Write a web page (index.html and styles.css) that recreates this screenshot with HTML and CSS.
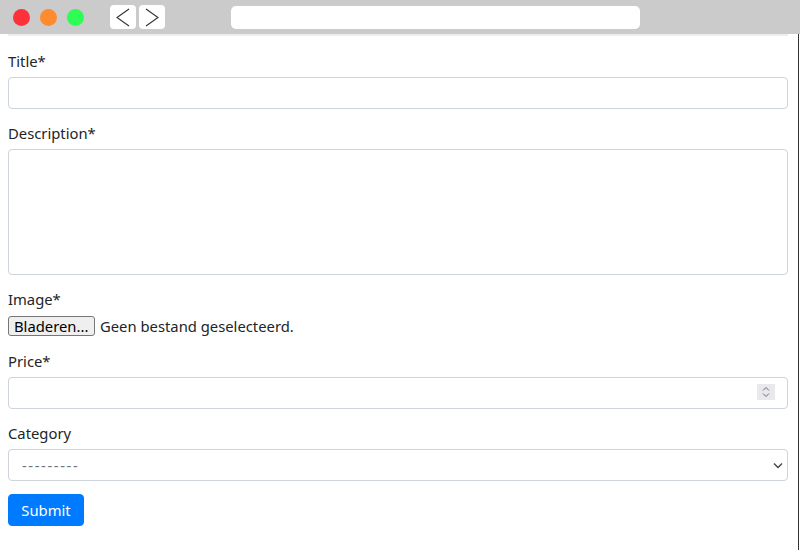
FILE: index.html
```html
<!DOCTYPE html>
<html>
<head>
<meta charset="utf-8">
<link rel="stylesheet" href="styles.css">
</head>
<body>
<div class="titlebar">
  <div class="lights">
    <span class="light red"></span>
    <span class="light orange"></span>
    <span class="light green"></span>
  </div>
  <div class="navs">
    <span class="navbtn"><svg width="26" height="24" viewBox="0 0 26 24"><path d="M19 4 L7 12.5 L19 21" fill="none" stroke="#333" stroke-width="1.1"/></svg></span>
    <span class="navbtn"><svg width="26" height="24" viewBox="0 0 26 24"><path d="M7 4 L19 12.5 L7 21" fill="none" stroke="#333" stroke-width="1.1"/></svg></span>
  </div>
  <div class="urlbar"></div>
</div>
<div class="page">
  <div class="divider"></div>
  <form class="form">
    <div class="group">
      <label class="label">Title*</label>
      <input class="control" type="text">
    </div>
    <div class="group">
      <label class="label">Description*</label>
      <textarea class="control area"></textarea>
    </div>
    <div class="group file-group">
      <label class="label">Image*</label>
      <div class="file">
        <span class="file-btn">Bladeren...</span>
        <span class="file-name">Geen bestand geselecteerd.</span>
      </div>
    </div>
    <div class="group">
      <label class="label">Price*</label>
      <div class="field">
        <input class="control" type="text">
        <span class="spinner"><svg width="18" height="16" viewBox="0 0 18 16"><path d="M6 6.5 L9 3.5 L12 6.5 M6 9.5 L9 12.5 L12 9.5" fill="none" stroke="#6b6b6b" stroke-width="1"/></svg></span>
      </div>
    </div>
    <div class="group">
      <label class="label">Category</label>
      <div class="field">
        <select class="control select"><option>---------</option></select>
        <span class="caret"><svg width="10" height="7" viewBox="0 0 10 7"><path d="M1 1.5 L5 5.5 L9 1.5" fill="none" stroke="#444" stroke-width="1.4"/></svg></span>
      </div>
    </div>
    <button class="submit" type="button">Submit</button>
  </form>
</div>
</body>
</html>
```
FILE: styles.css
```css
* { box-sizing: border-box; }
html, body { margin: 0; padding: 0; }
body {
  width: 800px;
  height: 550px;
  overflow: hidden;
  background: #fff;
  font-family: "Noto Sans", "Open Sans", sans-serif;
  font-size: 14.8px;
  color: #212529;
}
.titlebar {
  height: 34px;
  background: #cbcbcb;
  display: flex;
  align-items: center;
}
.lights {
  display: flex;
  gap: 10px;
  margin-left: 13px;
}
.light {
  width: 17px;
  height: 17px;
  border-radius: 50%;
  display: block;
}
.red { background: #fe3039; }
.orange { background: #fe8b2e; }
.green { background: #2dfe55; }
.navs {
  display: flex;
  gap: 3px;
  margin-left: 26px;
}
.navbtn {
  width: 26px;
  height: 24px;
  background: #fff;
  border-radius: 4px;
  display: block;
}
.navbtn svg { display: block; }
.urlbar {
  width: 409px;
  height: 23px;
  background: #fff;
  border-radius: 5px;
  margin-left: 66px;
}
.page {
  width: 799px;
  height: 516px;
  border-right: 1px solid #333;
}
.divider {
  height: 2px;
  background: #eeeeee;
  margin: 0 10px 0 8px;
}
.form {
  padding: 15px 10px 0 8px;
  display: flex;
  flex-direction: column;
}
.group {
  display: flex;
  flex-direction: column;
  margin-bottom: 14px;
}
.label {
  line-height: 20px;
  height: 20px;
  margin-bottom: 6px;
}
.control {
  width: 100%;
  height: 32px;
  border: 1px solid #ced4da;
  border-radius: 4px;
  background: #fff;
  font-family: inherit;
  font-size: 14.8px;
  color: #495057;
  padding: 0 12px;
  margin: 0;
  outline: none;
  display: block;
}
.area {
  height: 126px;
  resize: none;
}
.file-group .label { margin-bottom: 7px; }
.file-group { margin-bottom: 15px; }
.file {
  display: flex;
  align-items: center;
  height: 20px;
  gap: 5px;
}
.file-btn {
  height: 20px;
  line-height: 18px;
  padding: 0 5px;
  border: 1px solid #767676;
  border-radius: 3px;
  background: #efefef;
  color: #000;
  width: 87px;
  white-space: nowrap;
}
.field { position: relative; }
.spinner {
  position: absolute;
  right: 13px;
  top: 7px;
  width: 18px;
  height: 16px;
  background: #e9e9ed;
}
.spinner svg, .caret svg { display: block; }
.select {
  appearance: none;
  -webkit-appearance: none;
  padding-left: 13px;
  letter-spacing: 1.6px;
  color: #6c757d;
}
.caret {
  position: absolute;
  right: 5px;
  top: 13px;
}
.submit {
  align-self: flex-start;
  width: 76px;
  height: 32px;
  background: #007bff;
  border: 1px solid #007bff;
  border-radius: 4px;
  color: #fff;
  font-family: inherit;
  font-size: 14.8px;
  padding: 0;
  margin-top: -1px;
}
```
